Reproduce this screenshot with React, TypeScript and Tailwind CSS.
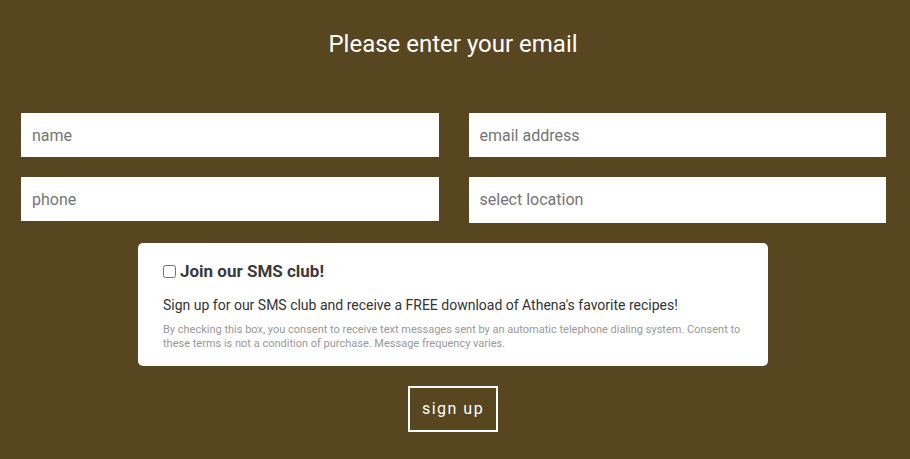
export default function App() {
  return (
    <div className="min-h-[459px] w-full bg-[#584621] font-['Roboto',sans-serif] pt-[28px]">
      <h1 className="text-center text-[24px] leading-[32px] text-white pr-[4px]">Please enter your email</h1>
      <form className="mt-[53px]">
        <div className="grid grid-cols-2 gap-x-[30px] gap-y-[20px] pl-[21px] pr-[24px]">
          <input
            className="h-[44px] bg-white px-[11px] text-[16px] text-[#333] placeholder:text-[#757575] outline-none"
            placeholder="name"
          />
          <input
            className="h-[44px] bg-white px-[11px] text-[16px] text-[#333] placeholder:text-[#757575] outline-none"
            placeholder="email address"
          />
          <input
            className="h-[44px] bg-white px-[11px] text-[16px] text-[#333] placeholder:text-[#757575] outline-none"
            placeholder="phone"
          />
          <div className="h-[46px] bg-white px-[11px] flex items-center text-[16px] text-[#757575]">
            select location
          </div>
        </div>
        <div className="mt-[20px] ml-[138px] w-[630px] rounded-[5px] bg-white px-[25px] pt-[16px] pb-[15px]">
          <label className="flex items-center gap-[4px] text-[17px] font-bold text-[#3a3a3a]">
            <input type="checkbox" className="h-[13px] w-[13px] m-0" />
            Join our SMS club!
          </label>
          <p className="mt-[10px] text-[14px] leading-[20px] text-[#333]">
            Sign up for our SMS club and receive a FREE download of Athena's favorite recipes!
          </p>
          <p className="mt-[8px] text-[11px] leading-[14px] text-[#999]">
            By checking this box, you consent to receive text messages sent by an automatic telephone dialing system. Consent to these terms is not a condition of purchase. Message frequency varies.
          </p>
        </div>
        <div className="mt-[20px] flex justify-center pr-[4px]">
          <button
            type="button"
            className="h-[46px] w-[90px] border-2 border-white text-[16px] tracking-[1.5px] text-white"
          >
            sign up
          </button>
        </div>
      </form>
    </div>
  )
}
